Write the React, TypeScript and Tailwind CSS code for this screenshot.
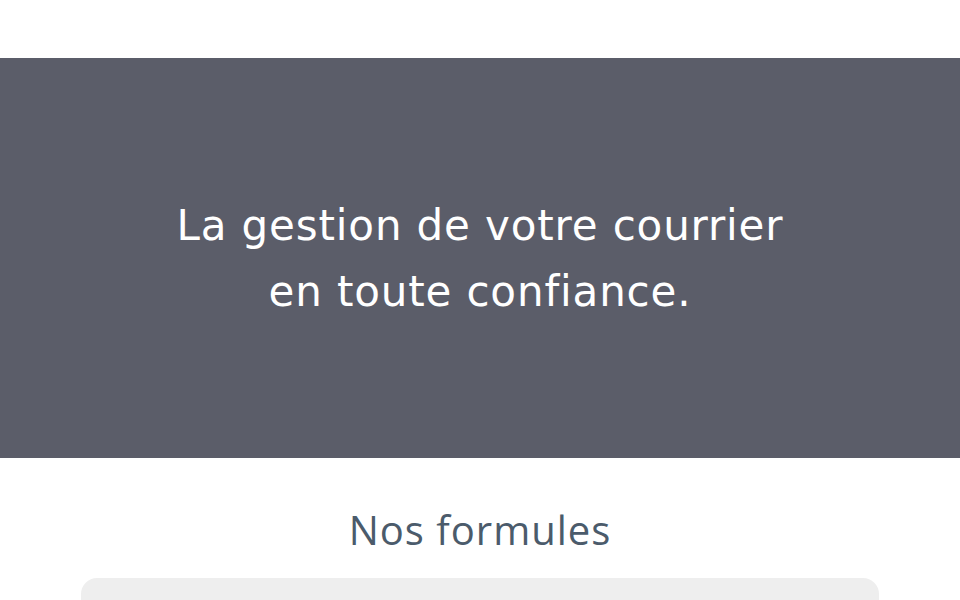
import React from "react";

export default function App() {
  return (
    <div
      className="h-[600px] w-full overflow-hidden bg-white"
      style={{ fontFamily: '"DejaVu Sans", "Open Sans", sans-serif' }}
    >
      <header className="h-[58px] bg-white" />
      <section className="flex h-[400px] items-center justify-center bg-[#5b5d69]">
        <h1 className="pt-[2px] text-center text-[42px] font-normal leading-[66px] tracking-[0.85px] text-white">
          La gestion de votre courrier
          <br />
          en toute confiance.
        </h1>
      </section>
      <section className="flex flex-col items-center pt-[44px]">
        <h2
          className="text-[40px] font-normal leading-[56px] tracking-[1px] text-[#4b5b6b]"
          style={{ fontFamily: '"Open Sans", sans-serif' }}
        >
          Nos formules
        </h2>
        <div className="mt-[20px] h-[120px] w-[798px] rounded-[16px] bg-[#eeeeee]" />
      </section>
    </div>
  );
}
